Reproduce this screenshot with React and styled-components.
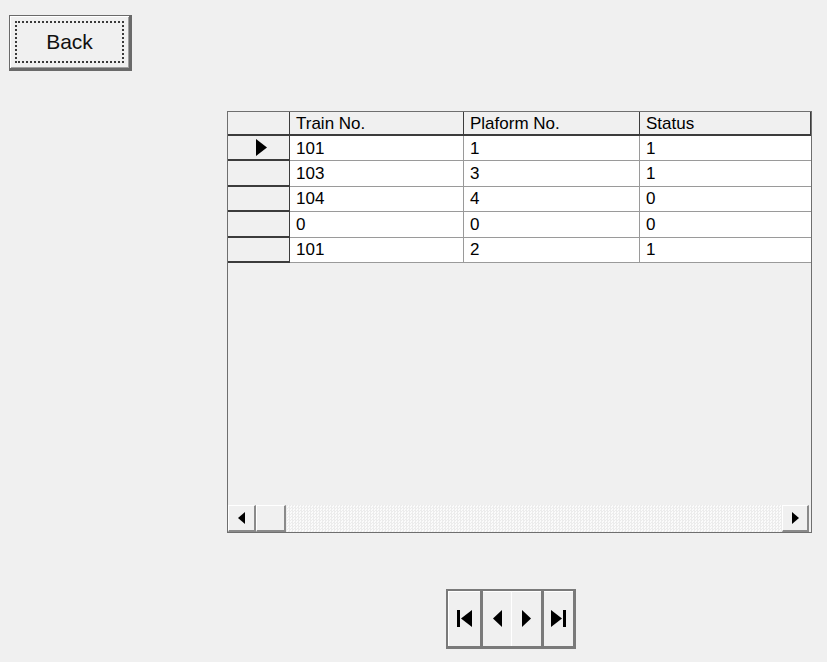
import React from "react";
import styled, { createGlobalStyle } from "styled-components";

const Global = createGlobalStyle`
  html, body { margin: 0; padding: 0; background: #f0f0f0; }
  * { box-sizing: border-box; }
`;

const Page = styled.div`
  width: 827px;
  height: 662px;
  background: #f0f0f0;
  font-family: "Liberation Sans", Arial, sans-serif;
  color: #000;
  display: flex;
  flex-direction: column;
  padding: 15px 0 0 9px;
  overflow: hidden;
`;

const BackButton = styled.button`
  width: 123px;
  height: 56px;
  padding: 5px;
  background: #f0f0f0;
  border: 1px solid #6a6a6a;
  border-right-width: 3px;
  border-bottom-width: 3px;
  box-shadow: inset 1px 1px 0 #ffffff, inset -1px -1px 0 #a0a0a0;
  font-family: inherit;
  cursor: pointer;
`;

const FocusRect = styled.span`
  display: flex;
  align-items: center;
  justify-content: center;
  height: 100%;
  border: 2px dotted #3a3a3a;
  font-size: 21px;
  color: #111;
`;

const Grid = styled.div`
  margin: 40px 0 0 218px;
  width: 585px;
  height: 422px;
  border: 1px solid #6f6f6f;
  background: #f0f0f0;
  display: flex;
  flex-direction: column;
`;

const Table = styled.div`
  display: grid;
  grid-template-columns: 62px 174px 176px 1fr;
  grid-auto-rows: 25.4px;
  grid-template-rows: 24px;
  font-size: 17px;
`;

const HeadCell = styled.div`
  background: #f0f0f0;
  border-right: 1px solid #3c3c3c;
  border-bottom: 2px solid #3c3c3c;
  padding: 2px 0 0 6px;
  display: flex;
  align-items: center;
  white-space: nowrap;
  &:last-child { border-right: none; }
`;

const RowHead = styled.div`
  background: #f0f0f0;
  border-right: 1px solid #3c3c3c;
  border-bottom: 2px solid #3c3c3c;
  display: flex;
  align-items: center;
  justify-content: center;
  padding-left: 6px;
`;

const Cell = styled.div`
  background: #fff;
  border-right: 1px solid #9a9a9a;
  border-bottom: 1px solid #9a9a9a;
  padding: 1px 0 0 6px;
  display: flex;
  align-items: center;
  &:nth-child(4n) { border-right: none; }
`;

const Spacer = styled.div`
  flex: 1;
`;

const ScrollBar = styled.div`
  height: 27px;
  margin: 0 2px 0 0;
  display: flex;
  background-color: #f6f6f6;
  background-image: repeating-conic-gradient(#ececec 0 25%, #fbfbfb 0 50%);
  background-size: 3px 3px;
`;

const ScrollButton = styled.div`
  width: ${(p) => p.$w}px;
  background: #f0f0f0;
  border-top: 1px solid #fff;
  border-left: 1px solid #fff;
  border-right: 2px solid #8a8a8a;
  border-bottom: 2px solid #8a8a8a;
  display: flex;
  align-items: center;
  justify-content: center;
`;

const Track = styled.div`
  flex: 1;
`;

const Nav = styled.div`
  margin: 56px 0 0 437px;
  display: flex;
  width: 130px;
  height: 60px;
  border: 2px solid #7a7a7a;
  border-right-width: 3px;
  border-bottom-width: 3px;
`;

const NavButton = styled.div`
  width: ${(p) => p.$w}px;
  background: #f0f0f0;
  border-left: ${(p) => (p.$sep === "dark" ? "3px solid #7a7a7a" : "1px solid #ffffff")};
  box-shadow: inset 0 1px 0 #fff;
  display: flex;
  align-items: center;
  justify-content: center;
`;

const Tri = ({ dir, w = 8, h = 14 }) => (
  <svg width={w} height={h} viewBox={`0 0 ${w} ${h}`}>
    {dir === "right" ? (
      <polygon points={`0,0 ${w},${h / 2} 0,${h}`} fill="#000" />
    ) : (
      <polygon points={`${w},0 0,${h / 2} ${w},${h}`} fill="#000" />
    )}
  </svg>
);

const FirstIcon = () => (
  <svg width="15" height="17" viewBox="0 0 15 17">
    <rect x="0" y="0" width="3" height="17" fill="#000" />
    <polygon points="15,0 4,8.5 15,17" fill="#000" />
  </svg>
);

const LastIcon = () => (
  <svg width="15" height="17" viewBox="0 0 15 17">
    <polygon points="0,0 11,8.5 0,17" fill="#000" />
    <rect x="12" y="0" width="3" height="17" fill="#000" />
  </svg>
);

const rows = [
  ["101", "1", "1"],
  ["103", "3", "1"],
  ["104", "4", "0"],
  ["0", "0", "0"],
  ["101", "2", "1"],
];

export default function App() {
  return (
    <Page>
      <Global />
      <BackButton>
        <FocusRect>Back</FocusRect>
      </BackButton>
      <Grid>
        <Table>
          <HeadCell />
          <HeadCell>Train No.</HeadCell>
          <HeadCell>Plaform No.</HeadCell>
          <HeadCell>Status</HeadCell>
          {rows.map((r, i) => (
            <React.Fragment key={i}>
              <RowHead>{i === 0 ? <Tri dir="right" w={11} h={17} /> : null}</RowHead>
              <Cell>{r[0]}</Cell>
              <Cell>{r[1]}</Cell>
              <Cell>{r[2]}</Cell>
            </React.Fragment>
          ))}
        </Table>
        <Spacer />
        <ScrollBar>
          <ScrollButton $w={28}>
            <Tri dir="left" w={7} h={12} />
          </ScrollButton>
          <ScrollButton $w={30} />
          <Track />
          <ScrollButton $w={27}>
            <Tri dir="right" w={7} h={12} />
          </ScrollButton>
        </ScrollBar>
      </Grid>
      <Nav>
        <NavButton $w={33} $sep="none">
          <FirstIcon />
        </NavButton>
        <NavButton $w={33} $sep="dark">
          <Tri dir="left" w={9} h={17} />
        </NavButton>
        <NavButton $w={31} $sep="light">
          <Tri dir="right" w={9} h={17} />
        </NavButton>
        <NavButton $w={33} $sep="dark">
          <LastIcon />
        </NavButton>
      </Nav>
    </Page>
  );
}
